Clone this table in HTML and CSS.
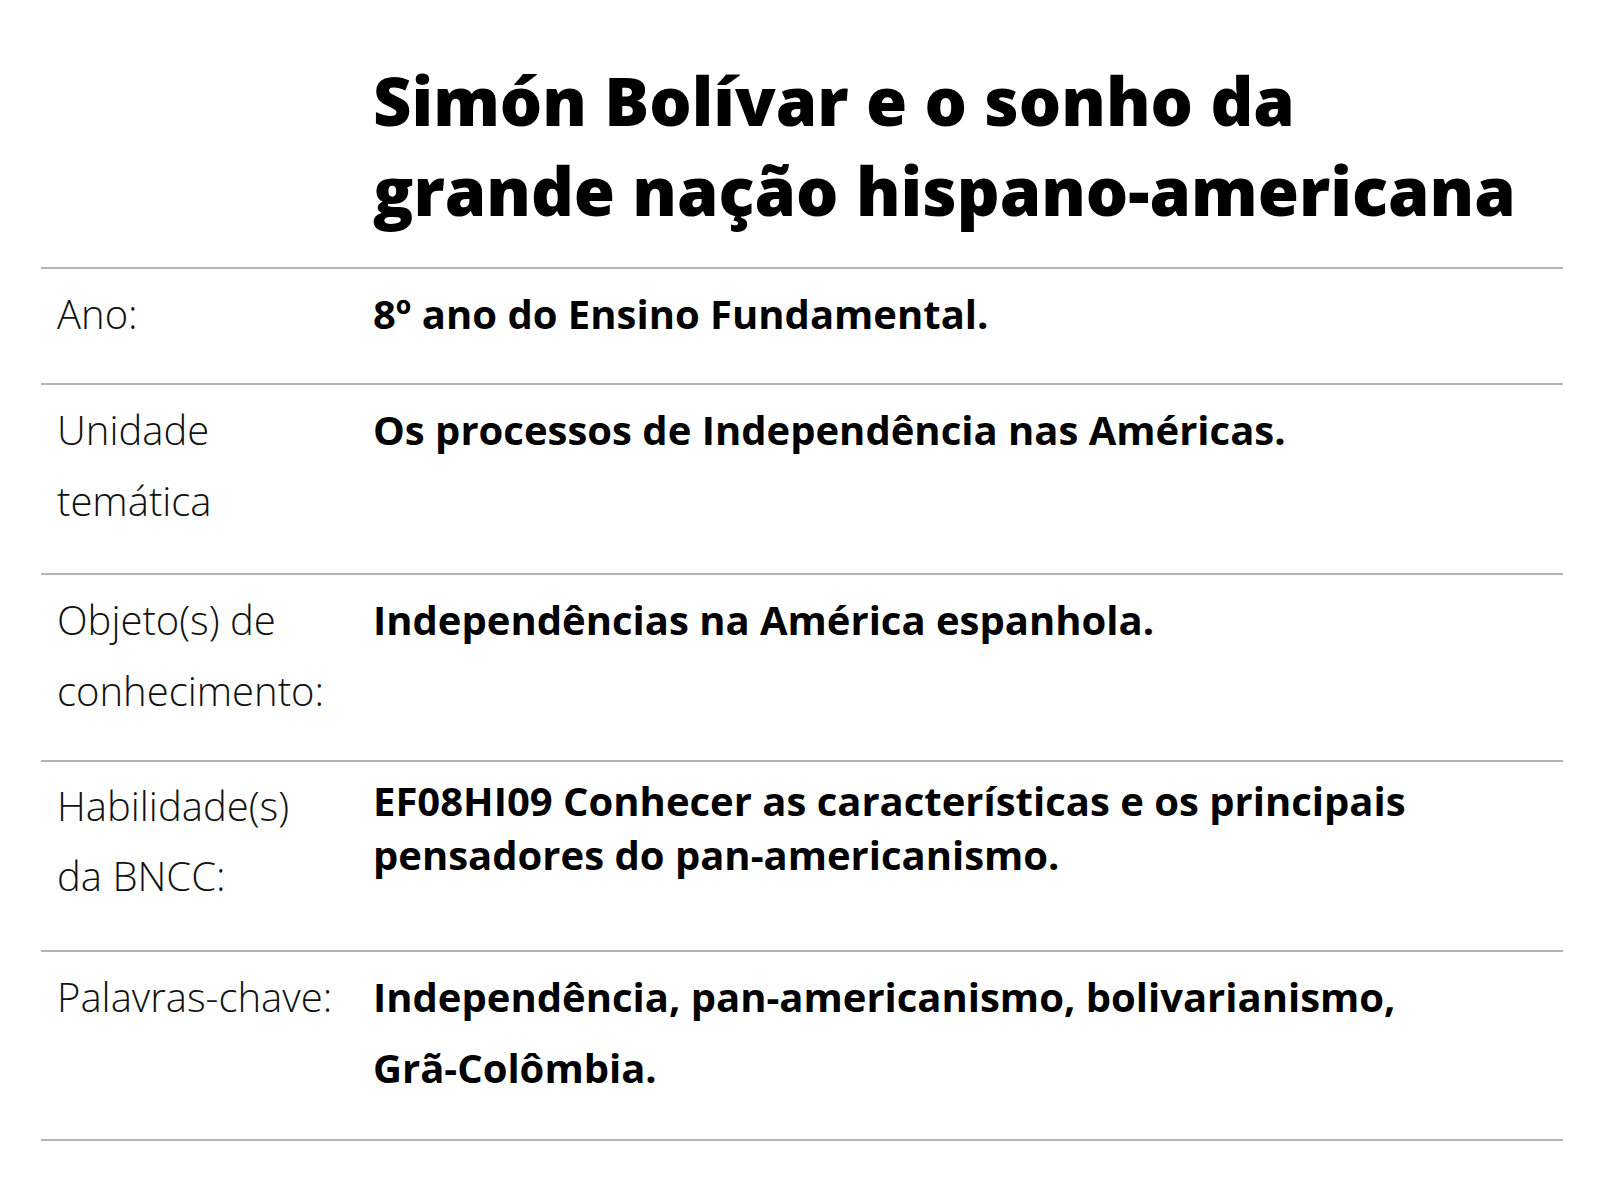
FILE: index.html
```html
<!DOCTYPE html>
<html lang="pt-BR">
<head>
<meta charset="utf-8">
<title>Simón Bolívar e o sonho da grande nação hispano-americana</title>
<link rel="stylesheet" href="styles.css">
</head>
<body>
<main class="sheet">
  <h1 class="title">Simón Bolívar e o sonho da<br>grande nação hispano-americana</h1>
  <div class="table">
    <div class="row row-short">
      <div class="label">Ano:</div>
      <div class="value">8º ano do Ensino Fundamental.</div>
    </div>
    <div class="row">
      <div class="label">Unidade<br>temática</div>
      <div class="value">Os processos de Independência nas Américas.</div>
    </div>
    <div class="row row-object">
      <div class="label">Objeto(s) de<br>conhecimento:</div>
      <div class="value">Independências na América espanhola.</div>
    </div>
    <div class="row">
      <div class="label label-tight">Habilidade(s)<br>da BNCC:</div>
      <div class="value value-tight">EF08HI09 Conhecer as características e os principais<br>pensadores do pan-americanismo.</div>
    </div>
    <div class="row row-last">
      <div class="label">Palavras-chave:</div>
      <div class="value">Independência, pan-americanismo, bolivarianismo,<br>Grã-Colômbia.</div>
    </div>
  </div>
</main>
</body>
</html>
```

FILE: styles.css
```css
html, body {
  margin: 0;
  padding: 0;
  background: #ffffff;
}

body {
  font-family: "Open Sans", "Noto Sans", "Liberation Sans", sans-serif;
  color: #000000;
}

.sheet {
  width: 1522px;
  margin-left: 41px;
  padding-top: 56px;
}

.title {
  margin: 0 0 31px 0;
  padding-left: 332px;
  font-size: 66.7px;
  line-height: 90px;
  font-weight: 800;
  color: #000000;
}

.table {
  display: flex;
  flex-direction: column;
}

.row {
  display: grid;
  grid-template-columns: 316px 1fr;
  border-top: 2px solid #b4b4b4;
}

.row-last {
  border-bottom: 2px solid #b4b4b4;
}

.label,
.value {
  padding: 9px 0 37px 16px;
  font-size: 40px;
  line-height: 71px;
}

.row-short .label,
.row-short .value,
.row-object .label,
.row-object .value {
  padding-bottom: 34px;
}

.row-last .label,
.row-last .value {
  padding-bottom: 36px;
}

.label {
  font-weight: 300;
  color: #111111;
}

.value {
  font-weight: 700;
  color: #000000;
}

.label-tight {
  line-height: 69.5px;
  padding-bottom: 40px;
}

.value-tight {
  line-height: 54px;
  padding-top: 12px;
}
```
